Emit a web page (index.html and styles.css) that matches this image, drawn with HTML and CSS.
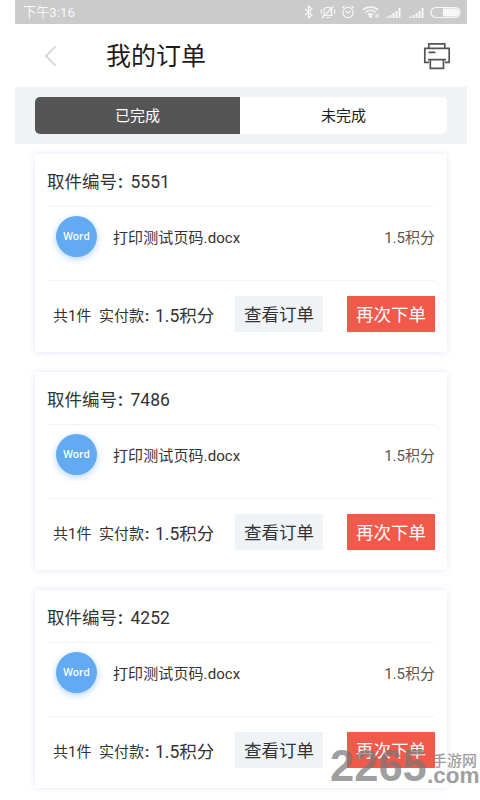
FILE: index.html
```html
<!DOCTYPE html>
<html lang="zh-CN">

<head>
    <meta charset="UTF-8">
    <meta name="viewport" content="width=device-width, initial-scale=1.0">
    <title>我的订单</title>
    <link rel="stylesheet" href="styles.css">
</head>

<body>

    <div class="phone">
        <div class="status-bar">
            <span class="time">下午3:16</span>
            <svg class="status-icons" width="158" height="16" viewBox="0 0 158 16" fill="none" stroke="#f7f7f7" stroke-width="1.2">
                <!-- bluetooth -->
                <path d="M1 5l7 6-3.500 3V2L8 5l-7 6" />
                <!-- muted bell -->
                <path d="M18.500 11.500h10.500M20 11V6c0-3.500 7.500-3.500 7.500 0v5.500M22 13.500h4M18 14L29.500 2.500M17.300 5.500v4M30.700 5.500v4" />
                <!-- alarm -->
                <circle cx="44" cy="8.500" r="5.200" />
                <path d="M41.500 7l2.500 2 2.500-2M38 4l2.500-2M50 4l-2.500-2" />
                <!-- wifi -->
                <path d="M59 6c4-4 11-4 15 0M61.500 8.500c3-2.700 7-2.700 10 0M64 11c1.500-1.300 3.500-1.300 5 0" stroke-width="1.6" />
                <circle cx="66.500" cy="12.500" r="1" fill="#f7f7f7" />
                <path d="M72 10v4M74 10v4" stroke-width="1" />
                <!-- signal -->
                <path d="M83.500 14v-1.500M86.500 14v-3M89.500 14V9M92.500 14V7M95.500 14V4" stroke-width="2" />
                <path d="M106.500 14v-1.500M109.500 14v-3M112.500 14V9M115.500 14V7M118.500 14V4" stroke-width="2" />
                <!-- battery -->
                <rect x="127" y="3.500" width="29" height="10" rx="5" />
                <path d="M139 4.500h12a4 4 0 0 1 0 8h-12z" fill="#f7f7f7" stroke="none" />
            </svg>
        </div>

        <div class="header">
            <svg class="back" width="14" height="22" viewBox="0 0 14 22" fill="none" stroke="#d6d9dc" stroke-width="2">
                <path d="M12.500 1.500L3 11l9.500 9.500" />
            </svg>
            <h1>我的订单</h1>
            <svg class="printer" width="28" height="28" viewBox="0 0 28 28" fill="none" stroke="#555" stroke-width="1.700">
                <path d="M5.800 6.300V1.800h16v4.500M6 20.300H1.800v-14h24.400v14H22" />
                <path d="M5 17.700h18M7.300 17.700v8.600h13.200v-8.600M5.500 10.300h7" />
            </svg>
        </div>

        <div class="tabs">
            <div class="tab-group">
                <div class="tab active">已完成</div>
                <div class="tab">未完成</div>
            </div>
        </div>

        <div class="orders">
            <div class="card">
                <div class="card-title">取件编号<span class="colon">:</span>5551</div>
                <div class="file">
                    <span class="file-icon">Word</span>
                    <span class="file-name">打印测试页码.docx</span>
                    <span class="points">1.5积分</span>
                </div>
                <div class="card-footer">
                    <span class="count">共1件</span>
                    <span class="pay">实付款<span class="colon">:</span></span>
                    <span class="total">1.5积分</span>
                    <button class="btn view">查看订单</button>
                    <button class="btn again">再次下单</button>
                </div>
            </div>

            <div class="card">
                <div class="card-title">取件编号<span class="colon">:</span>7486</div>
                <div class="file">
                    <span class="file-icon">Word</span>
                    <span class="file-name">打印测试页码.docx</span>
                    <span class="points">1.5积分</span>
                </div>
                <div class="card-footer">
                    <span class="count">共1件</span>
                    <span class="pay">实付款<span class="colon">:</span></span>
                    <span class="total">1.5积分</span>
                    <button class="btn view">查看订单</button>
                    <button class="btn again">再次下单</button>
                </div>
            </div>

            <div class="card">
                <div class="card-title">取件编号<span class="colon">:</span>4252</div>
                <div class="file">
                    <span class="file-icon">Word</span>
                    <span class="file-name">打印测试页码.docx</span>
                    <span class="points">1.5积分</span>
                </div>
                <div class="card-footer">
                    <span class="count">共1件</span>
                    <span class="pay">实付款<span class="colon">:</span></span>
                    <span class="total">1.5积分</span>
                    <button class="btn view">查看订单</button>
                    <button class="btn again">再次下单</button>
                </div>
            </div>
        </div>
    </div>

    <div class="watermark">
        <span class="mark-number">2265</span>
        <span class="mark-side">
            <span class="mark-cn">手游网</span>
            <span class="mark-com">.com</span>
        </span>
    </div>

</body>

</html>
```
FILE: styles.css
```css
* {
    box-sizing: border-box;
}

body {
    margin: 0;
    height: 800px;
    overflow: hidden;
    position: relative;
    background-color: #fff;
    color: #333;
    font-family: Roboto, "Noto Sans CJK SC", sans-serif;
}

.phone {
    width: 452px;
    margin-left: 15px;
}

/* Status bar */
.status-bar {
    display: flex;
    align-items: center;
    justify-content: space-between;
    height: 24px;
    padding: 0 5px 0 8px;
    background-color: #cbcbcb;
    color: #f7f7f7;
}

.time {
    font-size: 13.200px;
    line-height: 25px;
}

.status-icons {
    display: block;
}

/* Title row */
.header {
    display: flex;
    align-items: center;
    height: 63px;
    padding: 0 16px 0 28px;
}

h1 {
    margin: 2px auto 0 49px;
    font-size: 25px;
    font-weight: 400;
    line-height: 36px;
    color: #1c1c1c;
}

/* Tabs */
.tabs {
    height: 57px;
    padding: 10px 20px;
    background-color: #f0f3f5;
}

.tab-group {
    display: flex;
    height: 37px;
    border-radius: 5px;
    overflow: hidden;
    background-color: #fff;
}

.tab {
    flex: 1;
    font-size: 15px;
    line-height: 39px;
    text-align: center;
    color: #1c1c1c;
}

.tab.active {
    flex: 0 0 205px;
    background-color: #555;
    color: #fff;
}

/* Order cards */
.orders {
    display: flex;
    flex-direction: column;
    gap: 20px;
    padding: 10px 20px 0;
}

.card {
    height: 198px;
    padding: 0 12px;
    background-color: #fff;
    box-shadow: 0 0 6px rgba(90, 90, 220, 0.16);
}

.card-title {
    height: 53px;
    font-size: 17.500px;
    line-height: 57px;
    border-bottom: 1px solid #f3f4f5;
}

.colon {
    display: inline-block;
    width: 13.500px;
    padding-left: 1px;
    font-weight: 700;
}

.file {
    display: flex;
    height: 74px;
    padding: 9px 0 0 9px;
    border-bottom: 1px solid #f3f4f5;
    font-size: 15px;
    line-height: 44px;
}

.file-icon {
    width: 41px;
    height: 41px;
    margin-right: 16px;
    border-radius: 50%;
    background-color: #62abf2;
    box-shadow: 0 2px 7px rgba(70, 145, 255, 0.4);
    color: #fff;
    font-family: "Open Sans", sans-serif;
    font-size: 10.200px;
    font-weight: 600;
    line-height: 41px;
    text-align: center;
}

.file-name {
    letter-spacing: 0.1px;
}

.points {
    margin-left: auto;
    color: #555;
}

.card-footer {
    display: flex;
    align-items: center;
    height: 66px;
    padding-left: 6px;
    white-space: nowrap;
}

.count {
    width: 46px;
    font-size: 15px;
}

.pay {
    width: 56px;
    font-size: 15px;
}

.pay .colon {
    width: 11px;
}

.total {
    width: 80px;
    font-size: 17.500px;
}

.btn {
    width: 88px;
    height: 36px;
    padding: 0;
    border: none;
    font-family: inherit;
    font-size: 17.500px;
    line-height: 38px;
}

.view {
    background-color: #f0f3f5;
    color: #333;
}

.again {
    margin-left: auto;
    background-color: #f15a4a;
    color: #fff;
}

/* Site mark over the bottom right corner */
.watermark {
    position: absolute;
    left: 330px;
    top: 745px;
    display: flex;
    color: #777;
    opacity: 0.7;
    font-family: "Liberation Sans", sans-serif;
    font-weight: 700;
    white-space: nowrap;
}

.mark-number {
    width: 97px;
    font-size: 43.500px;
    line-height: 42px;
}

.mark-side {
    display: flex;
    flex-direction: column;
    padding-top: 7px;
}

.mark-cn {
    padding-left: 5px;
    font-family: "Noto Sans CJK SC", sans-serif;
    font-size: 15px;
    font-weight: 500;
    line-height: 15px;
}

.mark-com {
    font-size: 22.500px;
    line-height: 18px;
}
```
